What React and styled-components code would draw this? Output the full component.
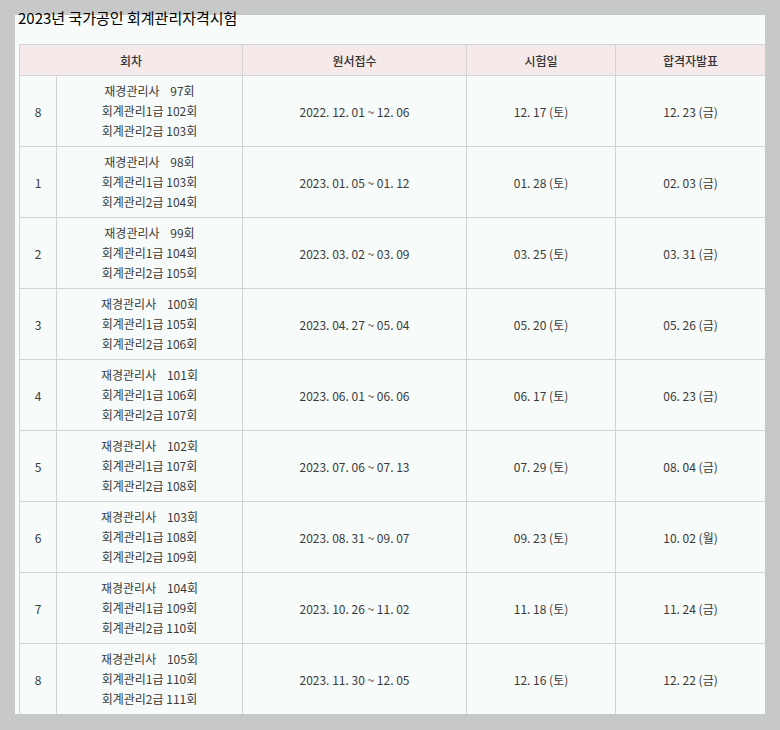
import styled, { createGlobalStyle } from "styled-components";

const GlobalStyle = createGlobalStyle`
  body {
    margin: 0;
    background: #c6c9c8;
    font-family: "Noto Sans CJK KR", "Noto Sans", sans-serif;
    color: #333;
  }
`;

const rows = [
  ["8", "97", "102", "103", "2022. 12. 01 ~ 12. 06", "12. 17 (토)", "12. 23 (금)"],
  ["1", "98", "103", "104", "2023. 01. 05 ~ 01. 12", "01. 28 (토)", "02. 03 (금)"],
  ["2", "99", "104", "105", "2023. 03. 02 ~ 03. 09", "03. 25 (토)", "03. 31 (금)"],
  ["3", "100", "105", "106", "2023. 04. 27 ~ 05. 04", "05. 20 (토)", "05. 26 (금)"],
  ["4", "101", "106", "107", "2023. 06. 01 ~ 06. 06", "06. 17 (토)", "06. 23 (금)"],
  ["5", "102", "107", "108", "2023. 07. 06 ~ 07. 13", "07. 29 (토)", "08. 04 (금)"],
  ["6", "103", "108", "109", "2023. 08. 31 ~ 09. 07", "09. 23 (토)", "10. 02 (월)"],
  ["7", "104", "109", "110", "2023. 10. 26 ~ 11. 02", "11. 18 (토)", "11. 24 (금)"],
  ["8", "105", "110", "111", "2023. 11. 30 ~ 12. 05", "12. 16 (토)", "12. 22 (금)"],
];

export default function App() {
  return (
    <>
      <GlobalStyle />
      <Title>2023년 국가공인 회계관리자격시험</Title>
      <Panel>
        <Table>
          <colgroup>
            <col style={{ width: 37 }} />
            <col style={{ width: 186 }} />
            <col style={{ width: 224 }} />
            <col style={{ width: 149 }} />
            <col style={{ width: 150 }} />
          </colgroup>
          <thead>
            <tr>
              <Th colSpan={2}>회차</Th>
              <Th>원서접수</Th>
              <Th>시험일</Th>
              <Th>합격자발표</Th>
            </tr>
          </thead>
          <tbody>
            {rows.map((r, i) => (
              <tr key={i}>
                <Td>{r[0]}</Td>
                <Td>
                  <Line>재경관리사&nbsp;&nbsp;&nbsp;&nbsp;{r[1]}회</Line>
                  <Line>회계관리1급 {r[2]}회</Line>
                  <Line>회계관리2급 {r[3]}회</Line>
                </Td>
                <Td>{r[4]}</Td>
                <Td>{r[5]}</Td>
                <Td>{r[6]}</Td>
              </tr>
            ))}
          </tbody>
        </Table>
      </Panel>
    </>
  );
}

const Title = styled.h2`
  margin: 0 0 -13px;
  padding: 8px 0 0 18px;
  font-size: 15px;
  line-height: 20px;
  font-weight: 400;
  color: #000;
`;

const Panel = styled.div`
  margin: 0 0 0 15px;
  width: 750px;
  height: 699px;
  padding: 29px 0 0 4px;
  box-sizing: border-box;
  background: #f7fbfa;
  overflow: hidden;
`;

const Table = styled.table`
  width: 746px;
  table-layout: fixed;
  border-collapse: collapse;
  font-size: 12px;
`;

const Th = styled.th`
  height: 30px;
  padding: 0;
  background: #f6e9e9;
  border: 1px solid #d2d4d3;
  font-size: 12px;
  font-weight: 500;
  color: #333;
  text-align: center;
`;

const Td = styled.td`
  height: 70px;
  padding: 0;
  border: 1px solid #d2d4d3;
  text-align: center;
  color: #3a3a3a;
`;

const Line = styled.div`
  line-height: 20px;
  white-space: nowrap;
`;
